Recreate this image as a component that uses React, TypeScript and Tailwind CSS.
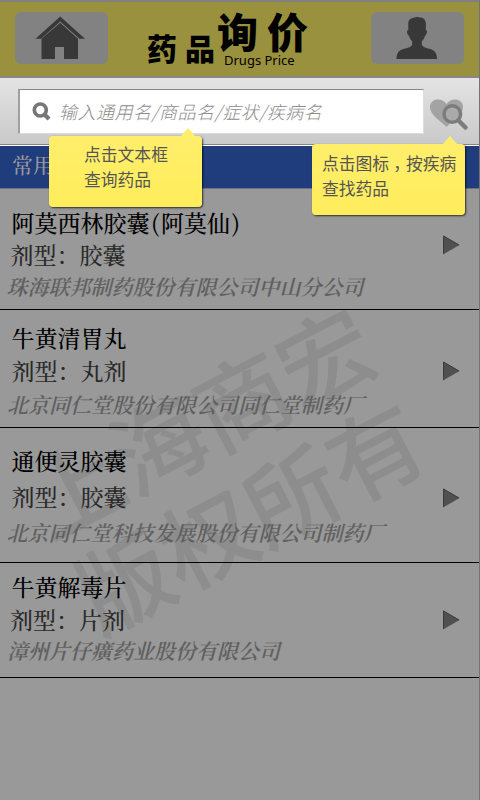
import React from "react";

const drugs = [
  {
    name: <>阿莫西林胶囊<Paren>(</Paren>阿莫仙<Paren>)</Paren></>,
    form: "胶囊",
    maker: "珠海联邦制药股份有限公司中山分公司",
    row: "h-[121px] pt-[22px]",
    formBox: "mt-[9px] pl-[10.5px]",
    makerBox: "mt-[10px] pl-[6.500px]",
    arrow: "top-[46px]",
  },
  {
    name: <>牛黄清胃丸</>,
    form: "丸剂",
    maker: "北京同仁堂股份有限公司同仁堂制药厂",
    row: "h-[118px] pt-[16px]",
    formBox: "mt-[10px] pl-[11.5px]",
    makerBox: "mt-[12px] pl-[7px]",
    arrow: "top-[51px]",
  },
  {
    name: <>通便灵胶囊</>,
    form: "胶囊",
    maker: "北京同仁堂科技发展股份有限公司制药厂",
    row: "h-[135px] pt-[21px]",
    formBox: "mt-[13px] pl-[11.5px]",
    makerBox: "mt-[14px] pl-[6.500px]",
    arrow: "top-[60px]",
  },
  {
    name: <>牛黄解毒片</>,
    form: "片剂",
    maker: "漳州片仔癀药业股份有限公司",
    row: "h-[115px] pt-[12px]",
    formBox: "mt-[10px] pl-[10px]",
    makerBox: "mt-[9px] pl-[7px]",
    arrow: "top-[47px]",
  },
];

function Paren({ children }: { children: React.ReactNode }) {
  return <span className="inline-block w-[11.5px] text-center">{children}</span>;
}

function Header() {
  return (
    <header className="flex h-[78px] items-start border-t-2 border-b-2 border-t-[#808080] border-b-[#8e8585] bg-[#9a913f]">
      <button className="ml-[15px] mt-[10px] flex h-[52px] w-[93px] justify-center rounded-[6px] bg-[#828282]">
        <svg width="93" height="52" viewBox="0 0 93 52" fill="#383838">
          <path d="M20.5 26.7 45.2 4.500 70 26.7H64.5L45.2 9.4 26 26.7Z" />
          <path d="M45.2 10.8 63 26.7V47H49V35H40V47H26.5V26.7Z" />
        </svg>
      </button>
      <div className="relative h-full w-[263px] text-black">
        <h1 className="flex font-['Noto_Sans_CJK_SC',sans-serif] font-black">
          <span className="ml-[39px] mt-[27px] w-[38px] text-[30px] leading-[36px]">药</span>
          <span className="mt-[27px] w-[32px] text-[30px] leading-[36px]">品</span>
          <span className="mt-[5px] w-[50px] text-[41px] leading-[46px]">询</span>
          <span className="mt-[5px] text-[41px] leading-[46px]">价</span>
        </h1>
        <span className="absolute left-[116px] top-[50px] whitespace-nowrap font-['Noto_Sans',sans-serif] text-[13px] leading-[16px]">
          Drugs Price
        </span>
      </div>
      <button className="mt-[10px] flex h-[52px] w-[93px] justify-center rounded-[6px] bg-[#828282]">
        <svg width="93" height="52" viewBox="0 0 93 52" fill="#383838">
          <path d="M37.300 12C37 9 38.500 6.700 41 6.200 44 5 47 4.300 49 5.500 52.500 5.500 55 8 54.900 12L54.800 18C56.800 18 56 22.500 54.200 23.500 53.500 26 52 28 50.800 29.500V32.500C51.500 35.500 56 36 60 37.200 64.500 39 66 42 66 47H25.500C25.500 42 27 39 31.500 37.200 35.500 36 40.500 35.500 41.200 32.500V29.500C40 28 38.500 26 37.800 23.500 36 22.500 35.300 18 37.300 18Z" />
        </svg>
      </button>
    </header>
  );
}

function SearchBar() {
  return (
    <div className="flex h-[68px] border-b border-b-white bg-linear-to-b from-[#e4e4e4] to-[#c9c9c9] shadow-[inset_0_-1px_0_#858585]">
      <div className="ml-[18px] mt-[11px] flex h-[45px] w-[406px] items-center border-t border-l-2 border-r border-b border-t-[#888] border-l-[#a0a0a0] border-r-[#ddd] border-b-[#ddd] bg-white">
        <svg className="ml-[12px]" width="20" height="20" viewBox="0 0 20 20" fill="none" stroke="#777">
          <circle cx="8.300" cy="8" r="6" strokeWidth="3.700" />
          <path d="M12.500 12.500 17 17" strokeWidth="4.200" />
        </svg>
        <span className="-mt-[2px] ml-[7px] font-['Noto_Sans_CJK_SC',sans-serif] text-[18px] leading-[24px] font-light tracking-[0.5px] whitespace-nowrap text-[#8c8c8c] italic">
          输入通用名/商品名/症状/疾病名
        </span>
      </div>
      <svg className="ml-[5px] mt-[18px]" width="42" height="38" viewBox="0 0 42 38">
        <path d="M17.500 31C12 25 1 19.500 1 11 1 2.500 12.500 1 17.500 8 22.500 1 34 2.500 34 11 34 19.500 23 25 17.500 31Z" fill="#a3a3a3" />
        <circle cx="23.300" cy="18" r="8.300" fill="#aaa" stroke="#7c7c7c" strokeWidth="3.500" />
        <path d="M29.500 24.500 36.500 31.500" stroke="#7c7c7c" strokeWidth="4.500" strokeLinecap="round" />
      </svg>
    </div>
  );
}

function Tip({ box, tail, text, children }: { box: string; tail: string; text: string; children: React.ReactNode }) {
  return (
    <div className={`absolute z-10 h-[71px] rounded-[4px] bg-linear-to-b from-[#ffee6b] to-[#ffed5c] shadow-[1px_1px_2px_rgba(0,0,0,0.7)] ${box}`}>
      <svg className={`absolute -top-[8px] ${tail}`} width="16" height="9" viewBox="0 0 16 9" fill="#ffee6b">
        <path d="M0 9 8 0 16 9Z" />
      </svg>
      <div className={`font-['Noto_Sans_CJK_SC',sans-serif] text-[16.8px] leading-[25px] whitespace-nowrap text-[#555] ${text}`}>
        {children}
      </div>
    </div>
  );
}

export default function App() {
  return (
    <div className="relative h-[800px] w-[480px] overflow-hidden border-r border-r-[#737373] bg-[#999]">
      <Header />
      <SearchBar />
      <nav className="h-[43px] border-b border-b-[#6f727b] bg-[#1f3c7c] pl-[12px] font-['Noto_Serif_CJK_SC','Noto_Sans_CJK_SC',serif] text-[21px] leading-[36px] font-medium text-[#999]">
        常用
      </nav>
      <div className="absolute left-[223px] top-[466px] -translate-x-1/2 -translate-y-1/2 -rotate-[27.5deg] text-center font-['Noto_Sans_CJK_SC',sans-serif] text-[94px] leading-[107px] font-medium whitespace-nowrap text-[#8d8d8d]">
        <p>上海商宏</p>
        <p>版权所有</p>
      </div>
      <main className="relative font-['Noto_Serif_CJK_SC','Noto_Sans_CJK_SC',serif]">
        {drugs.map((d) => (
          <section key={d.maker} className={`relative border-b border-b-black whitespace-nowrap ${d.row}`}>
            <h2 className="pl-[11.5px] text-[23px] leading-[23px] font-medium text-black">{d.name}</h2>
            <p className={`text-[23px] leading-[23px] font-medium text-[#2a2a2a] ${d.formBox}`}>剂型：{d.form}</p>
            <p className={`text-[21px] leading-[21px] font-semibold text-[#606060] italic ${d.makerBox}`}>{d.maker}</p>
            <svg className={`absolute left-[442px] ${d.arrow}`} width="18" height="20" viewBox="0 0 18 20">
              <path d="M1 .5 17.500 10 1 19.500Z" fill="#505050" />
              <path d="M1.500 19V1L17 10" fill="none" stroke="#3c3c3c" />
            </svg>
          </section>
        ))}
      </main>
      <Tip box="left-[49px] top-[136px] w-[153px]" tail="left-[131px]" text="pt-[6px] pl-[35px]">
        <p>点击文本框</p>
        <p>查询药品</p>
      </Tip>
      <Tip box="left-[312px] top-[144px] w-[153px]" tail="left-[130px]" text="pt-[7px] pl-[10px]">
        <p>点击图标<span className="relative left-[4px]">，</span>按疾病</p>
        <p>查找药品</p>
      </Tip>
    </div>
  );
}
